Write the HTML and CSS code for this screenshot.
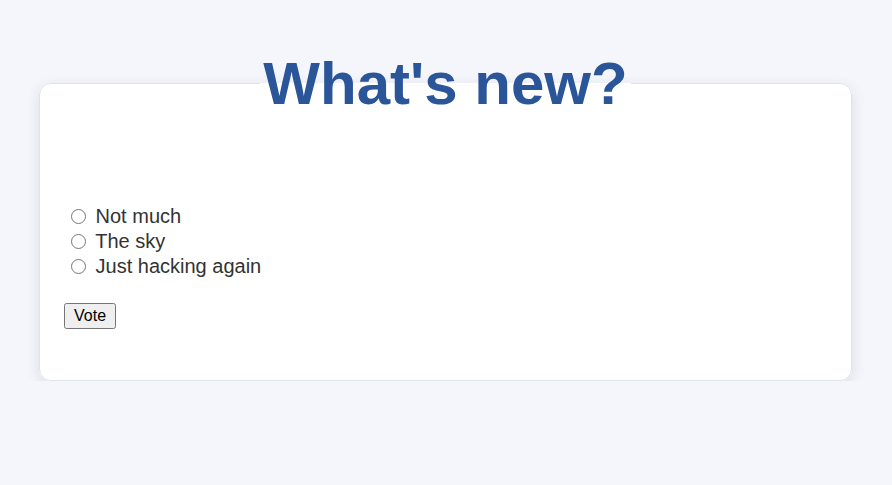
FILE: index.html
```html
<!DOCTYPE html>
<html>
<head>
<meta charset="utf-8">
<link rel="stylesheet" href="styles.css">
</head>
<body>
<form class="poll">
  <fieldset class="card">
    <legend class="title">What's new?</legend>
    <ul class="choices">
      <li class="choice"><label><input type="radio" name="choice" class="radio"> Not much</label></li>
      <li class="choice"><label><input type="radio" name="choice" class="radio"> The sky</label></li>
      <li class="choice"><label><input type="radio" name="choice" class="radio"> Just hacking again</label></li>
    </ul>
    <button type="button" class="vote">Vote</button>
  </fieldset>
</form>
</body>
</html>
```
FILE: styles.css
```css
html, body {
  margin: 0;
  background: #f4f6fb;
}
body {
  font-family: "Liberation Sans", Arial, sans-serif;
  color: #333;
}
.poll {
  padding: 49px 40px 0 39px;
}
.card {
  margin: 0;
  background: #fff;
  border: 1px solid #dfe2e8;
  border-radius: 12px;
  box-shadow: 0 4px 14px rgba(30, 40, 70, 0.12);
  padding: 0 24px 51px 24px;
  min-width: 0;
}
.title {
  margin: 0 auto;
  padding: 0 3px;
  font-size: 60px;
  font-weight: bold;
  color: #2a5599;
  line-height: 69px;
}
.choices {
  list-style: none;
  margin: 86px 0 24px 0;
  padding: 0;
}
.choice {
  font-size: 20px;
  line-height: 25px;
}
.radio {
  width: 15px;
  height: 15px;
  margin: 0 4px 0 7px;
  vertical-align: -1px;
}
.vote {
  font-family: "Liberation Sans", Arial, sans-serif;
  font-size: 16px;
  padding: 2px 8px;
  color: #000;
}
```
